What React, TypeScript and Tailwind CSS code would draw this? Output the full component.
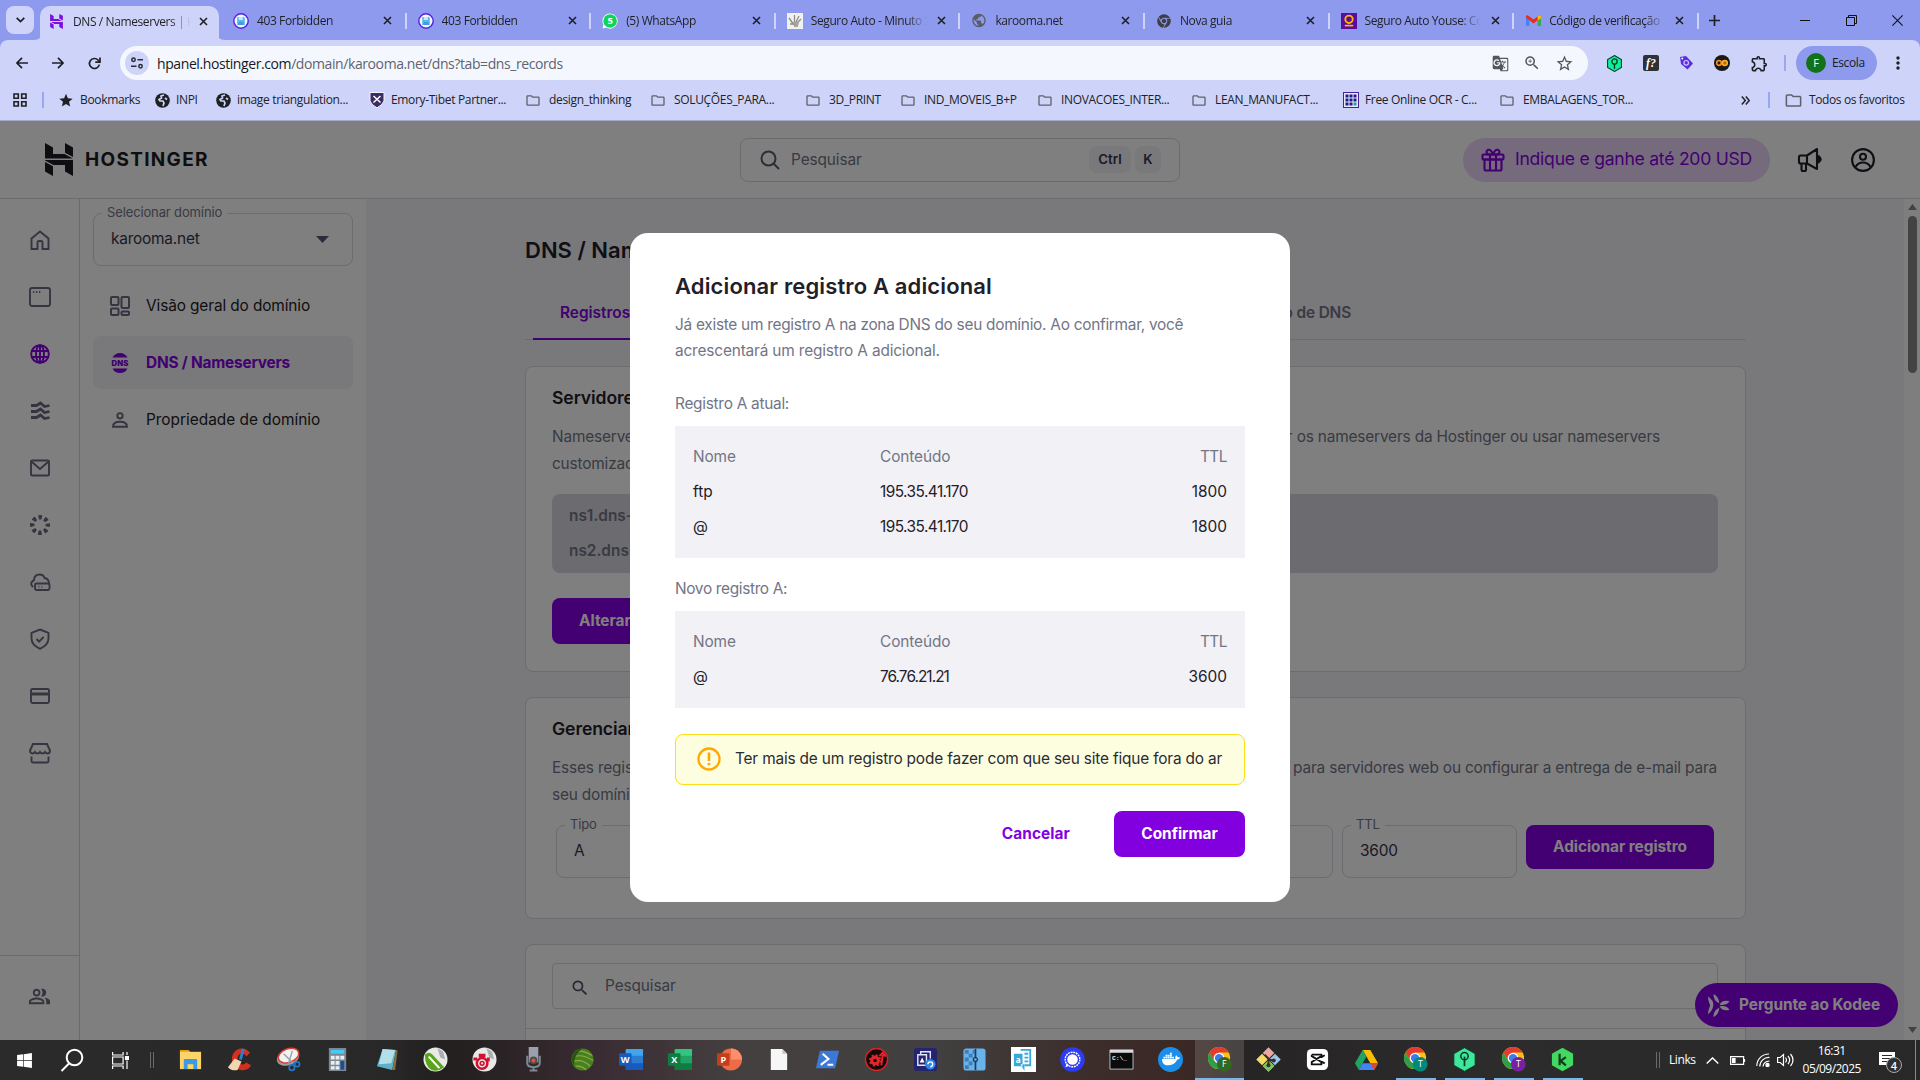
import React from 'react';
import { FaChrome, FaDocker, FaWindows } from 'react-icons/fa';
import { MdGTranslate, MdMoreVert, MdOutlineExtension, MdOutlineFolder, MdPublic, MdSearch, MdStar, MdStarBorder, MdZoomIn, MdOutlinePeopleAlt } from 'react-icons/md';
import { SiHostinger } from 'react-icons/si';

/* ---------- small pictograms ---------- */

const Close = () => (
  <svg className="size-[9px] shrink-0" viewBox="0 0 9 9" fill="none" stroke="#1f2024" strokeWidth="1.6"><path d="M1 1l7 7M8 1L1 8" /></svg>
);

const ForbiddenIcon = () => (
  <svg className="size-4" viewBox="0 0 16 16"><circle cx="8" cy="8" r="7.2" fill="#eef6ff" stroke="#5b1fe0" strokeWidth="1.4" /><path d="M4.2 4h6.6l1 1v7H4.2z" fill="#5db4f0" /><path d="M5.8 4h4v3h-4z" fill="#c8e8ff" /><path d="M5.4 9h5.2v3H5.4z" fill="#3f9de0" /></svg>
);
const WhatsIcon = () => (
  <svg className="size-4" viewBox="0 0 16 16"><path d="M8 .4a7.6 7.6 0 1 1-3.8 14.2L.6 15.4l.9-3.6A7.6 7.6 0 0 1 8 .4z" fill="#fff" /><circle cx="8.1" cy="8" r="6.8" fill="#0bd65b" /><text x="8.1" y="11.3" textAnchor="middle" fontSize="9.5" fontWeight="700" fill="#fff" fontFamily="Open Sans">5</text></svg>
);
const HandIcon = () => (
  <svg className="size-4" viewBox="0 0 16 16"><path d="M0 0h16v16H0z" fill="#f1f1f1" /><path d="M2 5l5 7M7.500 2v9M9 9l3-6M3 11h5M10 10l4-4M7 13h4" stroke="#8c8c86" strokeWidth="1.3" fill="none" /><path d="M6 9h6l-1 4H8z" fill="#a5a49c" /></svg>
);
const YouseIcon = () => (
  <svg className="size-4" viewBox="0 0 16 16"><path d="M0 0h16v16H0z" fill="#5a0ba0" /><circle cx="8" cy="6.300" r="3.700" fill="none" stroke="#ffb400" strokeWidth="1.900" /><path d="M3.800 12.600h8.400" stroke="#ffb400" strokeWidth="1.700" /></svg>
);
const GmailIcon = () => (
  <svg className="h-[11px] w-[15px]" viewBox="0 0 15 11"><path d="M0 1.500V10q0 1 1 1h2.400V4z" fill="#4285f4" /><path d="M15 1.500V10q0 1-1 1h-2.400V4z" fill="#34a853" /><path d="M0 2V1.200Q.4 0 2 .4L7.500 4.600 13 .4q1.600-.4 2 .8V2.600L7.500 8.400 0 2.600z" fill="#ea2a1c" /><path d="M11.600 1.500L13 .4q1.600-.4 2 .8v2l-3.400 2.300z" fill="#fbbc04" /></svg>
);
const Sparkle = ({ className }: { className: string }) => (
  <svg className={className} viewBox="0 0 22 22" fill="currentColor"><path d="M6.200 0q5 2.200 5.600 8.800Q6 6.500 6.200 0zM6.200 22q5-2.200 5.600-8.800Q6 15.500 6.200 22zM.8 2.500Q6.500 6 6 11T.8 19.500Q1.200 15 3 11 1.200 7 .8 2.500zM12 10.200Q14.500 5 21.500 6.800 19 11.500 12 10.200zM12 11.800q2.500 5.200 9.500 3.400Q19 10.500 12 11.800z" /></svg>
);

/* ---------- browser chrome ---------- */

const tabs = [
  { icon: <ForbiddenIcon />, title: '403 Forbidden' },
  { icon: <ForbiddenIcon />, title: '403 Forbidden' },
  { icon: <WhatsIcon />, title: '(5) WhatsApp' },
  { icon: <HandIcon />, title: 'Seguro Auto - Minuto Seguros' },
  { icon: <MdPublic className="size-[17px] text-[#5a5d66]" />, title: 'karooma.net' },
  { icon: <FaChrome className="size-[14px] text-[#3d3f45]" />, title: 'Nova guia' },
  { icon: <YouseIcon />, title: 'Seguro Auto Youse: Cotação' },
  { icon: <GmailIcon />, title: 'Código de verificação' },
];

const fade = '[mask-image:linear-gradient(to_right,#000_82%,transparent)]';

function TabStrip() {
  return (
    <div className="flex h-10 items-stretch bg-[#8e9aee] text-[12px] tracking-[-0.4px] text-[#1f2024]">
      <div className="ml-1.5 mt-1.5 flex h-7 w-7 items-center justify-center rounded-lg bg-[#ced4f9]">
        <svg className="h-[6px] w-[9px]" viewBox="0 0 9 6" fill="none" stroke="#1f2024" strokeWidth="1.8"><path d="M.7.800l3.800 3.800L8.300.8" /></svg>
      </div>
      <div className="flex w-[188px] items-end">
        <svg className="size-2 shrink-0" viewBox="0 0 8 8"><path d="M8 0v8H0q8 0 8-8z" fill="#ced4f9" /></svg>
        <div className="-mx-[2px] flex h-[34px] w-[179px] shrink-0 items-center rounded-t-[10px] bg-[#ced4f9] pb-[3px] pl-[9px]">
          <SiHostinger className="size-[15px] text-[#7a10dc]" />
          <span className={`ml-[9px] w-[118px] overflow-hidden whitespace-nowrap ${fade}`}>DNS / Nameservers | Hostinger</span>
          <span className="ml-[8px]"><Close /></span>
        </div>
        <svg className="size-2 shrink-0" viewBox="0 0 8 8"><path d="M0 0v8h8Q0 8 0 0z" fill="#ced4f9" /></svg>
      </div>
      <div className="flex pt-px">
        {tabs.map((t, i) => (
          <div key={i} className="flex w-[184.600px] items-center pl-[11px]">
            <span className="flex w-4 shrink-0 justify-center">{t.icon}</span>
            <span className={`ml-[8px] w-[116px] overflow-hidden whitespace-nowrap ${fade}`}>{t.title}</span>
            <span className="ml-[10px]"><Close /></span>
            <span className="ml-auto h-4 w-[2px] bg-[#ced4f9]" />
          </div>
        ))}
      </div>
      <div className="flex flex-1 items-center">
        <svg className="ml-[10px] size-[11px]" viewBox="0 0 11 11" stroke="#1f2024" strokeWidth="1.700"><path d="M5.500 0v11M0 5.500h11" /></svg>
        <svg className="ml-[80px] h-px w-[10px]" viewBox="0 0 10 1"><path d="M0 0h10v1H0z" fill="#111" /></svg>
        <svg className="ml-[36px] size-[11px]" viewBox="0 0 11 11" fill="none" stroke="#111"><path d="M.5 2.500h8v8h-8zM2.500 2.500v-2h8v8h-2" /></svg>
        <svg className="ml-[35px] size-[11px]" viewBox="0 0 11 11" stroke="#111" strokeWidth="1.100"><path d="M.4.400l10.200 10.200M10.600.4L.4 10.600" /></svg>
      </div>
    </div>
  );
}

const Arrow = ({ flip }: { flip?: boolean }) => (
  <svg className={flip ? 'size-3 rotate-180' : 'size-3'} viewBox="0 0 12 12" fill="none" stroke="#1f2024" strokeWidth="1.700"><path d="M12 6H1.200M6 .8L.9 6 6 11.200" /></svg>
);

function Toolbar() {
  return (
    <div className="flex h-[43px] items-center pt-[3px]">
      <div className="ml-4 flex w-[104px] items-center gap-6">
        <Arrow />
        <Arrow flip />
        <svg className="size-[13px]" viewBox="0 0 13 13" fill="none" stroke="#1f2024" strokeWidth="1.700"><path d="M11.300 7.600A5 5 0 1 1 10 3l1.500 1.500" /><path d="M12 .500v4.700H7.300" /></svg>
      </div>
      <div className="flex h-[34px] w-[1468px] items-center rounded-full bg-[#f4f7fe] px-[5px]">
        <div className="flex size-6 items-center justify-center rounded-full bg-[#ced4f9]">
          <svg className="size-3" viewBox="0 0 12 12" fill="none" stroke="#2b2d33" strokeWidth="1.500"><circle cx="2.500" cy="2.800" r="1.700" /><path d="M6.500 2.800H12M0 9.200h5.500" /><circle cx="9.500" cy="9.200" r="1.700" /></svg>
        </div>
        <span className="ml-2 text-[14px] tracking-[-0.41px] text-[#5f6470]"><span className="text-[#17181c]">hpanel.hostinger.com</span>/domain/karooma.net/dns?tab=dns_records</span>
        <div className="ml-auto flex items-center gap-[14px] pr-[9px] text-[#54565e]">
          <MdGTranslate className="size-[17px]" />
          <MdZoomIn className="size-[18px]" />
          <MdStarBorder className="size-[19px]" />
        </div>
      </div>
      <div className="ml-[18px] flex items-center gap-[20px]">
        <svg className="size-[17px]" viewBox="0 0 16 16"><path d="M8 .5l6.500 3.700v7.600L8 15.500l-6.500-3.700V4.200z" fill="#10f09a" stroke="#063b2b" /><circle cx="8" cy="6.200" r="2.500" fill="none" stroke="#063b2b" strokeWidth="1.200" /><path d="M8 8.700V13" stroke="#063b2b" strokeWidth="1.300" /></svg>
        <span className="flex size-4 items-center justify-center rounded-[2px] bg-[#303134] text-[12px] font-bold italic leading-none text-white [font-family:'Liberation_Serif',serif]">f?</span>
        <svg className="h-4 w-[15px]" viewBox="0 0 15 16"><path d="M1 2l6-1 7 7.500-5.500 6L2 9z" fill="#5b2be8" /><circle cx="7.200" cy="7.800" r="2.300" fill="none" stroke="#cfc6ff" strokeWidth="1.200" /><circle cx="3.300" cy="3.500" r="1" fill="#fff" /></svg>
        <svg className="size-4" viewBox="0 0 16 16"><circle cx="8" cy="8" r="8" fill="#17171c" /><circle cx="5" cy="8" r="2.300" fill="none" stroke="#f28a1c" strokeWidth="1.700" /><circle cx="10.800" cy="8" r="2.500" fill="#b96d12" stroke="#fbb025" strokeWidth="1.500" /></svg>
        <MdOutlineExtension className="size-[19px] text-[#1f2024]" />
      </div>
      <span className="ml-[15px] h-4 w-[2px] bg-[#9ba6f0]" />
      <div className="ml-[10px] flex h-[34px] w-[81px] items-center rounded-full bg-[#8e9aee] pl-[10px]">
        <span className="flex size-5 items-center justify-center rounded-full bg-[#12721a] text-[11px] text-white">F</span>
        <span className="ml-[6px] text-[12px] tracking-[-0.4px] text-[#1b1c22]">Escola</span>
      </div>
      <MdMoreVert className="ml-[11px] size-[20px] text-[#1f2024]" />
    </div>
  );
}

const folder = <MdOutlineFolder className="size-[19px] text-[#5f636d]" />;
const globe = (
  <svg className="size-[15px]" viewBox="0 0 15 15"><circle cx="7.500" cy="7.500" r="7.300" fill="#1f2024" /><path d="M9 2l-3 1 .500 2L4 6.500l1 1.500h3l1 2-1 3M10 5l2 1.500" stroke="#ced4f9" strokeWidth="1.700" fill="none" /></svg>
);
const bookmarks = [
  { w: 'w-[96px]', icon: <MdStar className="size-[17px] text-[#1f2024]" />, t: 'Bookmarks' },
  { w: 'w-[61px]', icon: globe, t: 'INPI' },
  { w: 'w-[154px]', icon: globe, t: 'image triangulation...' },
  { w: 'w-[156px]', icon: <svg className="size-4" viewBox="0 0 16 16"><path d="M1 .5h14V9q-2 4.500-7 6.800Q3 13.500 1 9z" fill="#3a2c66" stroke="#f3f3fa" /><path d="M4.500 4l7 6.500M11.500 4l-7 6.500" stroke="#fff" strokeWidth="1.500" /></svg>, t: 'Emory-Tibet Partner...' },
  { w: 'w-[125px]', icon: folder, t: 'design_thinking' },
  { w: 'w-[155px]', icon: folder, t: 'SOLUÇÕES_PARA...' },
  { w: 'w-[95px]', icon: folder, t: '3D_PRINT' },
  { w: 'w-[137px]', icon: folder, t: 'IND_MOVEIS_B+P' },
  { w: 'w-[154px]', icon: folder, t: 'INOVACOES_INTER...' },
  { w: 'w-[152px]', icon: folder, t: 'LEAN_MANUFACT...' },
  { w: 'w-[156px]', icon: <svg className="size-4" viewBox="0 0 16 16"><path d="M0 0h16v16H0z" fill="#4a1f9c" /><path d="M1 1h14v14H1z" fill="#e8e8f8" /><path d="M2.500 2.500h3v3h-3zm4 0h3v3h-3zm4 0h3v3h-3zm-8 4h3v3h-3zm4 0h3v3h-3zm4 0h3v3h-3zm-8 4h3v3h-3zm4 0h3v3h-3z" fill="#1d1a86" /><path d="M10.500 10.500h3v3h-3z" fill="#17a2a2" /></svg>, t: 'Free Online OCR - C...' },
  { w: 'w-[150px]', icon: folder, t: 'EMBALAGENS_TOR...' },
];

function BookmarkBar() {
  return (
    <div className="flex h-[38px] items-center border-b border-[#a3a9c9] pb-[3px] text-[12px] tracking-[-0.33px] text-[#202228]">
      <svg className="ml-[13px] size-[14px]" viewBox="0 0 14 14" fill="none" stroke="#1f2024" strokeWidth="1.600"><path d="M1 1h4.300v4.300H1zM8.700 1H13v4.300H8.700zM1 8.700h4.300V13H1zM8.700 8.700H13V13H8.700z" /></svg>
      <span className="ml-[15px] mr-[14px] h-4 w-[2px] bg-[#9ba6f0]" />
      <div className="flex">
        {bookmarks.map((b) => (
          <div key={b.t} className={`flex items-center whitespace-nowrap ${b.w}`}>
            <span className="flex w-4 shrink-0 justify-center">{b.icon}</span>
            <span className={b.icon === folder ? 'ml-[8px]' : 'ml-[6px]'}>{b.t}</span>
          </div>
        ))}
      </div>
      <svg className="ml-auto size-[9px]" viewBox="0 0 9 9" fill="none" stroke="#1f2024" strokeWidth="1.500"><path d="M.8.500l3.500 4-3.500 4M4.800.500l3.500 4-3.500 4" /></svg>
      <span className="ml-[18px] mr-[14px] h-4 w-[2px] bg-[#9ba6f0]" />
      <div className="flex w-[136px] items-center whitespace-nowrap">{folder}<span className="ml-[6px] tracking-[-0.380px]">Todos os favoritos</span></div>
    </div>
  );
}

/* ---------- panel ---------- */

const railIcons = [
  <path d="M2.500 9.500L11 2.500l8.500 7V20h-6v-6.500q0-1.500-1.500-1.500h-2q-1.500 0-1.500 1.500V20h-6z" />,
  <><rect x="1" y="2" width="20" height="18" rx="2" /><path d="M4 6h1.300M7 6h1.300M10 6h1.300" /></>,
  <><circle cx="11" cy="11" r="8.800" /><ellipse cx="11" cy="11" rx="4" ry="8.800" /><path d="M2.500 8h17M2.500 14h17M11 2v18" /></>,
  <path d="M2 5.500h5.500L11.500 3l4 3.500 5-1M2 11.500h5.500L11.500 9l4 3.500 5-1M2 17.500h5.500l4-2.500 4 3.500 5-1" strokeWidth="2.800" />,
  <><rect x="2" y="3.500" width="18" height="15" rx="1" /><path d="M3 5l8 7 8-7" /></>,
  <circle cx="11" cy="11" r="7.800" strokeWidth="4.400" strokeDasharray="3.400 2.726" strokeDashoffset="1.700" />,
  <><path d="M4 16Q.8 13 3.200 10.500 4.500 9.500 5 9 5.500 3.500 10.500 3.500q4 0 5 3.500 4 .5 4.500 5" /><rect x="6" y="12.500" width="14.500" height="6.500" rx="1.500" /><path d="M9.500 15.800h.8M12.500 15.800h.8" /></>,
  <><path d="M11 1.500l8.500 3.300v5.500Q19.500 17 11 20.800 2.500 17 2.500 10.300V4.800z" /><path d="M7.500 11l2.600 2.600 4.600-4.800" /></>,
  <><rect x="2" y="4" width="18" height="14" rx="1.500" /><path d="M2 9h18" strokeWidth="3" /></>,
  <path d="M4 2h14l3 6.500q0 3-2.500 3-1.500 0-2.500-1.500-1 1.500-2.500 1.500T11 10q-1 1.500-2.500 1.500T6 10q-1 1.500-2.500 1.500Q1 11.500 1 8.500zM2.500 14.500V19q0 1.500 1.500 1.500h14q1.500 0 1.500-1.500v-4.500" />,
];

function Rail() {
  return (
    <div className="flex w-20 shrink-0 flex-col border-r border-[#d6d5dc] bg-white text-[#6d6880]">
      <div className="flex flex-col items-center gap-[35px] pt-[30px]">
        {railIcons.map((p, i) => (
          <svg key={i} className={i === 2 ? 'size-[22px] text-[#8400e0]' : 'size-[22px]'} viewBox="0 0 22 22" fill="none" stroke="currentColor" strokeWidth="1.900">{p}</svg>
        ))}
      </div>
      <div className="mt-auto flex h-[85px] items-start justify-center border-t border-[#d6d5dc] pt-[29px]">
        <MdOutlinePeopleAlt className="size-[23px]" />
      </div>
    </div>
  );
}

function Field({ label, value, className, children }: { label: string; value: string; className: string; children?: React.ReactNode }) {
  return (
    <div className={`relative h-[53px] rounded-lg border border-[#d8d7de] ${className}`}>
      <span className="absolute -top-[11px] left-[8px] bg-white px-[5px] text-[13px] leading-[18px] tracking-[-0.13px] whitespace-nowrap text-[#727586]">{label}</span>
      <div className="flex h-full items-center pb-px pl-[17px] text-[15.400px] tracking-[-0.2px] text-[#36344d]">{value}{children}</div>
    </div>
  );
}

function Sidebar() {
  return (
    <div className="flex w-[288px] shrink-0 flex-col border-r-2 border-[#f5f5f8] bg-white pl-[13px] pr-[14px] pt-[14px] text-[15.400px] text-[#1f2029]">
      <Field label="Selecionar domínio" value="karooma.net" className="w-[260px]">
        <svg className="ml-auto mr-[23px] h-[7px] w-[13px]" viewBox="0 0 13 7"><path d="M0 0h13L6.500 7z" fill="#5b5675" /></svg>
      </Field>
      <div className="mt-[13px] flex h-[53px] items-center pl-[17px]">
        <svg className="size-5" viewBox="0 0 20 20" fill="none" stroke="#6d6880" strokeWidth="2"><rect x="1" y="1" width="7.500" height="8" rx="1" /><rect x="11.500" y="1" width="7.500" height="11" rx="1" /><rect x="1" y="12.500" width="7.500" height="6.500" rx="1" /><rect x="11.500" y="15.500" width="7.500" height="3.500" rx="1" /></svg>
        <span className="ml-4 tracking-[-0.11px]">Visão geral do domínio</span>
      </div>
      <div className="mt-[4px] flex h-[53px] w-[260px] items-center rounded-lg bg-[#f2f1f6] pl-[17px] text-[#8400e0]">
        <svg className="size-5" viewBox="0 0 20 20" fill="currentColor"><path d="M2.500 4.600Q5 0 10 0t7.500 4.600zM2.500 15.400Q5 20 10 20t7.500-4.600z" /><text x="10" y="12.700" textAnchor="middle" fontSize="7.800" fontWeight="900" fontFamily="Inter">DNS</text></svg>
        <span className="ml-4 font-bold tracking-[-0.2px]">DNS / Nameservers</span>
      </div>
      <div className="mt-[4px] flex h-[53px] items-center pl-[17px]">
        <svg className="size-5" viewBox="0 0 20 20" fill="none" stroke="#6d6880" strokeWidth="1.900"><circle cx="10" cy="5.800" r="2.700" /><path d="M3 16.800q0-5 7-5t7 5z" /></svg>
        <span className="ml-4">Propriedade de domínio</span>
      </div>
    </div>
  );
}

function PanelHeader() {
  return (
    <div className="flex h-[78px] shrink-0 items-center border-b border-[#d6d5dc] bg-white">
      <div className="flex w-[740px] items-center pl-[45px] text-[#1c1d24]">
        <svg className="h-[33px] w-[28px]" viewBox="0 0 28 33" fill="currentColor"><path d="M0 0l8 4.500V11h11.500l8.500 4.500H0zM20 0l8 4.500V14l-8-4.300zM0 17h28v16l-8-4.500V22H8.500L0 17.500zM0 19l8 4.300V33l-8-4.500z" /></svg>
        <span className="ml-[12px] mt-[2px] text-[19px] font-bold tracking-[1.3px]">HOSTINGER</span>
      </div>
      <div className="flex h-[44px] w-[440px] items-center rounded-lg border border-[#d6d5dc] pl-[19px] pr-[18px]">
        <svg className="size-[20px]" viewBox="0 0 20 20" fill="none" stroke="#5b5870" strokeWidth="2"><circle cx="8.500" cy="8.500" r="7" /><path d="M13.500 13.500l5.500 5.500" /></svg>
        <span className="ml-[11px] text-[15.400px] tracking-[-0.1px] text-[#727586]">Pesquisar</span>
        <div className="ml-auto flex gap-1 text-[13.200px] font-semibold text-[#36344d]">
          <span className="flex h-[27px] w-[42px] items-center justify-center rounded-lg bg-[#f2f1f6]">Ctrl</span>
          <span className="flex h-[27px] w-[26px] items-center justify-center rounded-lg bg-[#f2f1f6]">K</span>
        </div>
      </div>
      <div className="ml-[283px] flex h-[44px] w-[307px] items-center rounded-full bg-[#ebd6fa] pl-[18px] text-[#8400e0]">
        <svg className="size-6" viewBox="0 0 24 24" fill="none" stroke="currentColor" strokeWidth="2.100"><rect x="1.500" y="6.500" width="21" height="5" rx="1" /><path d="M3.500 11.500h17V21q0 1.500-1.500 1.500H5Q3.500 22.500 3.500 21zM9 7v15M15 7v15M12 6.500Q10 1 7 1.800 4 3.500 7 6.500zM12 6.500q2-5.500 5-4.700 3 1.700 0 4.700z" /></svg>
        <span className="ml-[10px] whitespace-nowrap text-[17.600px] tracking-[-0.26px]">Indique e ganhe até 200 USD</span>
      </div>
      <svg className="ml-[27px] size-[26px]" viewBox="0 0 26 26" fill="none" stroke="#1f2029" strokeWidth="2.100" strokeLinejoin="round"><path d="M3.500 8.500h6.500L20 2v20l-10-5.500H3.500Q2 16.500 2 15v-5q0-1.500 1.500-1.500zM10 8.500v8M4.500 16.500v6q0 1.500 1.500 1.500h1.500Q9 24 9 22.500v-6" /><path d="M21.500 9q4.500 3.300 0 6.500z" fill="#1f2029" /></svg>
      <svg className="ml-[28px] size-6" viewBox="0 0 24 24" fill="none" stroke="#1f2029" strokeWidth="2.100"><circle cx="12" cy="12" r="10.900" /><circle cx="12" cy="8.800" r="3" /><path d="M4.500 19Q7 14.500 12 14.500t7.500 4.500" /></svg>
    </div>
  );
}

const card = 'flex shrink-0 flex-col rounded-lg border border-[#d8d7de] bg-white';

function MainArea() {
  return (
    <div className="flex flex-1 overflow-hidden bg-[#f2f1f6] text-[15.400px] text-[#727586]">
      <div className="flex w-[1379px] flex-col pl-[157px]">
        <div className="mt-[34px] h-[34px] shrink-0 text-[22px] font-semibold leading-[34px] text-[#1f2029]">DNS / Nameservers</div>
        <div className="mt-[20px] flex h-[53px] w-[1221px] shrink-0 border-b border-[#d8d7de] pl-[8px] font-semibold leading-[51px]">
          <div className="-mb-px h-[53px] w-[165px] border-b-2 border-[#8400e0] pl-[27px] text-[#8400e0]">Registros DNS</div>
          <div className="w-[653px] text-right tracking-[-0.15px]">Histórico de DNS</div>
        </div>
        <div className={`mt-[26px] h-[306px] w-[1221px] pl-[26px] pt-[18px] ${card}`}>
          <div className="h-[26px] text-[17.600px] font-semibold leading-[26px] tracking-[-0.1px] text-[#1f2029]">Servidores DNS</div>
          <div className="mt-[12px] flex w-[1108px] justify-between leading-[27px] tracking-[-0.17px]"><span>Nameservers atuais do seu domínio</span><span>alterar os nameservers da Hostinger ou usar nameservers</span></div>
          <div className="leading-[27px] tracking-[-0.17px]">customizados</div>
          <div className="mt-[17px] flex h-[79px] w-[1166px] flex-col rounded-lg bg-[#d8d7e0] pl-[17px] pt-[4px] font-semibold leading-[35px] text-[#727586]">
            <span>ns1.dns-parking.com</span>
            <span>ns2.dns-parking.com</span>
          </div>
          <div className="mt-[25px] flex h-[46px] w-[260px] items-center rounded-lg bg-[#8600e4] pl-[27px] font-bold text-white">Alterar nameservers</div>
        </div>
        <div className={`mt-[25px] h-[222px] w-[1221px] pl-[26px] pt-[18px] ${card}`}>
          <div className="h-[26px] text-[17.600px] font-semibold leading-[26px] tracking-[-0.1px] text-[#1f2029]">Gerenciar registros DNS</div>
          <div className="mt-[12px] flex w-[1165px] justify-between leading-[27px] tracking-[-0.17px]"><span>Esses registros definem o domínio</span><span>para servidores web ou configurar a entrega de e-mail para</span></div>
          <div className="leading-[27px] tracking-[-0.17px]">seu domínio.</div>
          <div className="mt-[17px] flex pl-[4px]">
            <Field label="Tipo" value="A" className="w-[200px]" />
            <Field label="Aponta para" value="76.76.21.21" className="ml-[9px] w-[568px]" />
            <Field label="TTL" value="3600" className="ml-[9px] w-[175px]" />
            <div className="ml-[9px] flex h-[44px] w-[188px] items-center justify-center rounded-lg bg-[#8600e4] font-bold tracking-[-0.04px] text-white">Adicionar registro</div>
          </div>
        </div>
        <div className="mt-[25px] h-[120px] w-[1221px] shrink-0 rounded-t-lg border border-[#d8d7de] bg-white pt-[18px]">
          <div className="ml-[26px] flex h-[46px] w-[1166px] items-center rounded border border-[#d8d7de] pl-[17px] text-[#727586]">
            <MdSearch className="mt-[3px] size-[20px] text-[#4c4a63]" />
            <span className="ml-[15px] tracking-[-0.1px]">Pesquisar</span>
          </div>
          <div className="mt-[19px] border-t border-[#d8d7de]" />
        </div>
      </div>
      <div className="ml-auto flex w-4 shrink-0 flex-col items-center bg-[#fcfcfc] pt-[5px]">
        <svg className="h-[6px] w-[9px]" viewBox="0 0 9 6"><path d="M4.500 0L9 6H0z" fill="#868686" /></svg>
        <span className="mt-[6px] h-[157px] w-[9px] rounded-full bg-[#868686]" />
        <svg className="mb-[7px] mt-auto h-[6px] w-[9px]" viewBox="0 0 9 6"><path d="M4.500 6L9 0H0z" fill="#868686" /></svg>
      </div>
    </div>
  );
}

/* ---------- dialog ---------- */

function RecordTable({ rows, className }: { rows: string[][]; className: string }) {
  return (
    <div className={`bg-[#f2f1f6] px-[18px] pt-[13px] text-[#1f2029] ${className}`}>
      <div className="flex h-[35px] items-center text-[#727586] tracking-[-0.1px]"><span className="w-[187px]">Nome</span><span className="flex-1">Conteúdo</span><span className="tracking-[-0.500px]">TTL</span></div>
      {rows.map((r, i) => (
        <div key={i} className="flex h-[35px] items-center"><span className="w-[187px]">{r[0]}</span><span className={r[1].startsWith('76') ? 'flex-1 tracking-[-0.950px]' : 'flex-1 tracking-[-0.550px]'}>{r[1]}</span><span>{r[2]}</span></div>
      ))}
    </div>
  );
}

function Dialog() {
  return (
    <div className="flex h-[669px] w-[660px] flex-col rounded-[18px] bg-white px-[45px] pt-[36px] text-[15.400px] text-[#727586]">
      <div className="h-[34px] text-[22px] font-semibold leading-[34px] tracking-[0.14px] text-[#1f2029]">Adicionar registro A adicional</div>
      <div className="mt-[9px] whitespace-nowrap leading-[26.400px] tracking-[-0.27px]">Já existe um registro A na zona DNS do seu domínio. Ao confirmar, você<br /><span className="tracking-[-0.160px]">acrescentará um registro A adicional.</span></div>
      <div className="mt-[26px] leading-[26px] tracking-[-0.270px]">Registro A atual:</div>
      <RecordTable className="mt-[9px] h-[132px]" rows={[['ftp', '195.35.41.170', '1800'], ['@', '195.35.41.170', '1800']]} />
      <div className="mt-[18px] leading-[26px] tracking-[-0.330px]">Novo registro A:</div>
      <RecordTable className="mt-[9px] h-[97px]" rows={[['@', '76.76.21.21', '3600']]} />
      <div className="mt-[26px] flex h-[51px] items-center rounded-lg border border-[#fadf17] bg-[#fdfee0] pb-px pl-[21px] text-[#2a2b33]">
        <svg className="size-[24px]" viewBox="0 0 24 24" fill="none" stroke="#fea800" strokeWidth="2.300"><circle cx="12" cy="12" r="10.500" /><path d="M12 5.500v8.500M12 16v2.200" strokeWidth="2.600" /></svg>
        <span className="ml-[14px] whitespace-nowrap tracking-[-0.17px]">Ter mais de um registro pode fazer com que seu site fique fora do ar</span>
      </div>
      <div className="mt-[26px] flex items-center justify-end font-bold">
        <span className="mr-[44px] text-[#8400e0] tracking-[0.1px]">Cancelar</span>
        <span className="flex h-[46px] w-[131px] items-center justify-center rounded-lg bg-[#8200e0] text-white tracking-[0px]">Confirmar</span>
      </div>
    </div>
  );
}

/* ---------- taskbar ---------- */

const Chrome = ({ badge, letter }: { badge: string; letter: string }) => (
  <svg viewBox="0 0 26 26"><circle cx="12.500" cy="11.500" r="11.500" fill="#fbc116" /><path d="M2.540 5.750A11.500 11.500 0 0 1 22.460 5.750H12.500L7.500 14.400z" fill="#e33b2e" /><path d="M2.540 5.750A11.500 11.500 0 0 0 12.500 23l5-8.600h-10z" fill="#2f9e4b" /><circle cx="12.500" cy="11.500" r="5.600" fill="#fff" /><circle cx="12.500" cy="11.500" r="4.300" fill="#3b7bea" /><circle cx="18" cy="18" r="7.600" fill={badge} /><text x="18" y="21.300" fontSize="9" textAnchor="middle" fill="#fff" fontFamily="Open Sans">{letter}</text></svg>
);
const Office = ({ dark, mid, light, letter, round }: { dark: string; mid: string; light: string; letter: string; round?: boolean }) => (
  <svg viewBox="0 0 26 26">{round ? <><circle cx="14.500" cy="13" r="11.500" fill={mid} /><path d="M14.500 1.500A11.500 11.500 0 0 1 26 13H14.500z" fill={light} /></> : <><rect x="7" y="2" width="18" height="22" rx="1.500" fill={mid} /><path d="M7 3.500q0-1.500 1.500-1.500h15Q25 2 25 3.500V9H7z" fill={light} /><path d="M7 17h18v5.500q0 1.500-1.500 1.500h-15Q7 24 7 22.500z" fill={dark} /></>}<rect x="0" y="6.500" width="13" height="13" rx="1" fill={dark} /><text x="6.500" y="16.500" fontSize="9.500" fontWeight="700" textAnchor="middle" fill="#fff" fontFamily="Open Sans">{letter}</text></svg>
);

const apps: React.ReactNode[] = [
  <svg viewBox="0 0 26 26"><path d="M2 3h9l2 2.500h-11z" fill="#e8a317" /><path d="M2 5h22v18H2z" fill="#fcd46a" /><path d="M6 14q0-1.500 1.500-1.500h11Q20 12.500 20 14v9h-4v-5h-6v5H6z" fill="#3d9ae0" /></svg>,
  <svg viewBox="0 0 26 26"><path d="M24 6Q18-1 10 3 3 8 6 17q4 8 12 7 5-1 7-5l-5-3q-2 3-5 2-5-2-4-7 2-5 5-4 3 0 4 3z" fill="#d5301f" /><path d="M14 13L17 2" stroke="#2a7fd0" strokeWidth="3" /><path d="M8 12l7 3-4 9q-7 1-10-3z" fill="#f0d7b0" /></svg>,
  <svg viewBox="0 0 26 26"><ellipse cx="12.500" cy="11" rx="12" ry="8" fill="#9a9da1" transform="rotate(-20 12.500 11)" /><ellipse cx="13" cy="9" rx="11" ry="7" fill="#f3f3f3" stroke="#d9423a" strokeWidth="1.600" transform="rotate(-20 13 9)" /><path d="M8 7l9 9M17 4l-4 13" stroke="#9aa3ab" strokeWidth="1.500" /><circle cx="16.500" cy="21.500" r="2.800" fill="none" stroke="#2275c4" strokeWidth="1.800" /><circle cx="22" cy="18" r="2.500" fill="none" stroke="#2275c4" strokeWidth="1.800" /></svg>,
  <svg viewBox="0 0 26 26"><path d="M4 1h18v24H4z" fill="#7d8691" /><path d="M6 3h14v4H6z" fill="#40cdf5" /><path d="M6 9h4v4H6zm5 0h4v4h-4zm5 0h4v4h-4zM6 14.500h4v4H6zm5 0h4v4h-4zM6 20h4v3.500H6zm5 0h4v3.500h-4z" fill="#e9eef2" /><path d="M16 14.500h4v9h-4z" fill="#194f97" /></svg>,
  <svg viewBox="0 0 26 26"><path d="M9 2l14 1-4 21-16-4z" fill="#5fb0c4" /><path d="M9 2l13 1-4 14-13 1z" fill="#b3e0e8" /><path d="M19 24l4-21 1.500 1L22 24z" fill="#8a6f3f" /></svg>,
  <svg viewBox="0 0 26 26"><circle cx="13" cy="13" r="12.500" fill="#e9eae8" /><path d="M15 1l3 10 5 2-2-8z" fill="#a9aeb2" /><path d="M2 8q4-4 8 0l12 13q-6 5-13 3Q2 20 2 8z" fill="#58a618" /><path d="M6 10l11 12" stroke="#fff" strokeWidth="2.200" /></svg>,
  <svg viewBox="0 0 26 26"><circle cx="13" cy="13" r="12.500" fill="#e9eae8" /><path d="M15 1l3 10 5 2-2-8z" fill="#a9aeb2" /><circle cx="10.500" cy="17" r="5.500" fill="none" stroke="#cf1230" strokeWidth="2.600" /><circle cx="10.500" cy="17" r="2" fill="none" stroke="#cf1230" strokeWidth="1.600" /><path d="M7 7h7v4H7zM1.500 11h4v3h-4zM15.500 11h3v4h-3z" fill="#cf1230" /></svg>,
  <svg viewBox="0 0 26 26"><path d="M8 0h10v16H8z" fill="#98a1ac" /><path d="M6.500 9v8q0 4 6.500 4t6.500-4V9M13 21v4M9 24.500h8" stroke="#7d8691" strokeWidth="2.200" fill="none" /><circle cx="13" cy="14" r="3" fill="#f0541e" stroke="#4a4d55" strokeWidth="2" /></svg>,
  <svg viewBox="0 0 26 26"><circle cx="13" cy="13" r="11.500" fill="#477f22" /><path d="M8 4q8 0 15 5M4 10q9-3 20 4M3 15q10-3 18 5M6 20q6-1 11 4" stroke="#8fae3c" strokeWidth="1.200" fill="none" /><path d="M13 1.500a11.500 11.500 0 0 0-9 18q0-12 9-18z" fill="#27540f" /></svg>,
  <Office dark="#185abd" mid="#2b7cd3" light="#41a5ee" letter="W" />,
  <Office dark="#107c41" mid="#21a366" light="#33c481" letter="X" />,
  <Office dark="#c43e1c" mid="#ed6c47" light="#ff8f6b" letter="P" round />,
  <svg viewBox="0 0 26 26"><path d="M5 2h12l5 5v17H5z" fill="#f7f7f7" /><path d="M17 2l5 5h-5z" fill="#c4c4c4" /></svg>,
  <svg viewBox="0 0 26 26"><path d="M5 4h20l-4 18H1z" fill="#3c78d8" /><path d="M8 7l6 5.500L6 18.500M13 18.500h6" stroke="#fff" strokeWidth="2.200" fill="none" /></svg>,
  <svg viewBox="0 0 26 26"><circle cx="13" cy="13" r="11.500" fill="#140808" stroke="#d92128" strokeWidth="1.500" /><circle cx="11.500" cy="14" r="3.500" fill="none" stroke="#e3262c" strokeWidth="3.200" /><circle cx="11.500" cy="14" r="5.600" fill="none" stroke="#e3262c" strokeWidth="1.600" strokeDasharray="2.200 2.200" /><path d="M18 19l1.500-11M16 9.500L19.500 6l3 4" stroke="#e3262c" strokeWidth="2" fill="none" /></svg>,
  <svg viewBox="0 0 26 26"><rect x="1" y="1" width="24" height="24" rx="3" fill="#25246f" /><path d="M8 8V5h10v7M5 8h9v11H5z" stroke="#dfe4ff" strokeWidth="1.500" fill="none" /><path d="M7 16l2.500-5 2.500 5z" fill="#fff" /><circle cx="18" cy="18" r="5.500" fill="#2b86ec" /><path d="M15.500 18a2.500 2.500 0 1 1 2.500 2.500" stroke="#fff" strokeWidth="1.400" fill="none" /></svg>,
  <svg viewBox="0 0 26 26"><rect x="1.500" y="1.500" width="23" height="23" rx="3" fill="#69b2ea" /><path d="M3 3h4v4H3zm4 4h4v4H7zm-4 4h4v4H3zm4 4h4v4H7zm-4 4h4v4H3zM11 3h2v4h-2zm0 8h2v4h-2z" fill="#3f7fb8" /><path d="M14 2v22" stroke="#1d3c5c" strokeWidth="1.800" /><circle cx="14" cy="13" r="2" fill="#69b2ea" stroke="#1d3c5c" strokeWidth="1.300" /></svg>,
  <svg viewBox="0 0 26 26"><path d="M0 0h26v26H0z" fill="#fff" /><path d="M10 3h10v16h-6M14 7h4M14 11h4M14 15h4" stroke="#36a9dc" strokeWidth="1.900" fill="none" /><path d="M3 7h9v13H3zM10 18l4 7V18z" fill="#36a9dc" /><text x="7.500" y="16.500" fontSize="9" fontWeight="700" textAnchor="middle" fill="#fff" fontFamily="Open Sans">a</text></svg>,
  <svg viewBox="0 0 26 26"><circle cx="13" cy="13" r="12.800" fill="#2e3bee" /><circle cx="13" cy="13" r="5.500" fill="#fff" /><circle cx="13" cy="13" r="7.600" fill="none" stroke="#fff" strokeWidth="1.500" strokeDasharray="2 .8" /><path d="M7 17l-1.500 4 4-1.500z" fill="#fff" /></svg>,
  <svg viewBox="0 0 26 26"><path d="M1 3h24v20H1z" fill="#0b0b0b" stroke="#b9bdc2" /><path d="M1 3h24v3H1z" fill="#d9dcdf" /><text x="3" y="13.500" fontSize="6.500" fontWeight="700" fill="#f0f0f0" fontFamily="Liberation Mono">C:\_</text></svg>,
  <span className="flex size-[25px] items-center justify-center rounded-full bg-[#1b8eea]"><FaDocker className="size-[18px] text-white" /></span>,
  <Chrome badge="#33691e" letter="F" />,
  <svg viewBox="0 0 26 26"><g transform="rotate(45 13 13)"><path d="M4 4h8.500v8.500H4z" fill="#e9a8a0" /><path d="M13.500 4H22v8.500h-8.500z" fill="#9ac4ec" /><path d="M13.500 13.500H22V22h-8.500z" fill="#f4dc67" /><path d="M13.500 13.500H22V22h-8.500z" fill="#7ac25d" /><path d="M4 13.500h8.500V22H4z" fill="#f4dc67" /></g><path d="M9 8l4 4v7M13 13l5 1" stroke="#3b2b25" strokeWidth="2" fill="none" /><circle cx="13" cy="19" r="2" fill="#3b2b25" /><circle cx="18.500" cy="14" r="2" fill="#3b2b25" /></svg>,
  <svg viewBox="0 0 26 26"><rect x="2" y="2" width="22" height="22" rx="5" fill="#fff" /><path d="M7 8h10v1.500l-10 6V18h10v-2.500l-10-6V8M17 10.500l3.500-2M17 15l3.500 2" stroke="#111" strokeWidth="1.900" fill="none" /></svg>,
  <svg viewBox="0 0 26 26"><path d="M9 3h8l8 14h-8z" fill="#fbbc04" /><path d="M9 3L1 17l4 7L13 10z" fill="#1fa463" /><path d="M5 24h16l4-7H9z" fill="#4285f4" /><path d="M25 17l-4 7-4-7z" fill="#ea4335" /></svg>,
  <Chrome badge="#00897b" letter="T" />,
  <svg viewBox="0 0 26 26"><path d="M13 .8l11 6.200v12L13 25.200 2 19V7z" fill="#3ee89a" stroke="#0c3a2b" strokeWidth=".8" /><circle cx="13" cy="9.500" r="3.800" fill="none" stroke="#0c3a2b" strokeWidth="1.600" /><path d="M13 10v10" stroke="#0c3a2b" strokeWidth="1.800" /></svg>,
  <Chrome badge="#7b1fa2" letter="T" />,
  <svg viewBox="0 0 26 26"><path d="M13 .8l11 6.200v12L13 25.200 2 19V7z" fill="#43d860" /><path d="M10 7v12M16.500 10.500L11 14.500l5.500 4.500" stroke="#0e3d1f" strokeWidth="2.300" fill="none" /></svg>,
];

function Taskbar() {
  return (
    <div className="flex h-10 shrink-0 items-stretch bg-[linear-gradient(to_right,#2b2b2b_0,#292828_380px,#221f1e_450px,#3a2c33_600px,#454040_740px,#413f3f_940px,#3c2d2b_1090px,#3a2824_1190px,#262424_1245px,#2d2c2c_1500px,#292828_1920px)] text-[12px] text-white">
      <div className="flex w-[166px] items-center">
        <FaWindows className="ml-4 size-[17px]" />
        <svg className="ml-[27px] size-[24px]" viewBox="0 0 24 24" fill="none" stroke="#fff" strokeWidth="2"><circle cx="14.500" cy="9.500" r="7.800" /><path d="M9 15.500L1.500 23" /></svg>
        <svg className="ml-[28px] size-[17px]" viewBox="0 0 17 17" fill="none" stroke="#fff" strokeWidth="1.200"><path d="M.6 0v3h10.500V0M.6 17v-3h10.500v3M.6 5h10.500v7H.6zM15 0v3M15 8.500V17" /><path d="M13.500 4.500h3v3h-3z" fill="#fff" /></svg>
        <span className="ml-[21px] h-4 w-[4px] border-x border-[#6a6a6a]" />
      </div>
      {apps.map((a, i) => (
        <div key={i} className={`flex w-[49px] shrink-0 justify-center ${i === 21 ? 'bg-white/15' : ''}`}>
          <div className={`flex h-10 items-center justify-center border-b-2 ${i === 21 ? 'w-[49px] border-[#76b9ed]' : i > 24 ? 'w-10 border-[#76b9ed]' : 'w-10 border-transparent'}`}>
            <div className="flex size-[25px] items-center justify-center [&>svg]:size-[25px]">{a}</div>
          </div>
        </div>
      ))}
      <div className="flex flex-1 items-center tracking-[-0.4px]">
        <span className="ml-[69px] h-4 w-[4px] border-x border-[#6a6a6a]" />
        <span className="ml-[9px]">Links</span>
        <svg className="ml-[10px] h-[7px] w-[13px]" viewBox="0 0 13 7" fill="none" stroke="#fff" strokeWidth="1.400"><path d="M.7 6.500l5.800-5.600 5.800 5.600" /></svg>
        <svg className="ml-[11px] h-[9px] w-[16px]" viewBox="0 0 16 9" fill="none" stroke="#fff" strokeWidth="1.200"><path d="M.6.600h13v7.800H.6zM14.500 3v3" /><path d="M2.500 2.500h2.500v4H2.500z" fill="#fff" /></svg>
        <svg className="ml-[10px] size-[14px]" viewBox="0 0 14 14" fill="none" stroke="#fff" strokeWidth="1.200"><path d="M.8 13A12 12 0 0 1 13 1M3.800 13.500A9 9 0 0 1 13.500 4.500M7 13.500Q7.500 8.500 13.500 8" /><circle cx="11.500" cy="12" r="1.600" fill="#fff" /></svg>
        <svg className="ml-[7px] h-[14px] w-[17px]" viewBox="0 0 17 14" fill="none" stroke="#fff" strokeWidth="1.200"><path d="M.6 4.500h2.600L6.500 1.500v11L3.200 9.500H.6zM8.500 4.500q2 2.500 0 5M11 2.800q3.300 4.200 0 8.400M13.500 1q5 6 0 12" /></svg>
        <div className="ml-[7px] w-[62px] text-center leading-[18px] tracking-[-0.550px]">16:31<br />05/09/2025</div>
        <div className="relative ml-[16px] flex size-6 items-center">
          <svg className="size-4" viewBox="0 0 16 16"><path d="M0 0h16v13h-5l-3 3v-3H0z" fill="#fff" /><path d="M3 3.500h10M3 6.500h10M3 9.500h7" stroke="#2b2b2b" strokeWidth="1.200" /></svg>
          <span className="absolute left-[7px] top-[9px] flex size-4 items-center justify-center rounded-full border border-[#aaa] bg-[#2f2f2f] text-[11px] font-semibold leading-none">4</span>
        </div>
        <span className="ml-auto mr-1 h-10 w-px bg-[#8a8a8a]" />
      </div>
    </div>
  );
}

export default function App() {
  return (
    <div className="flex h-[1080px] w-[1920px] flex-col overflow-hidden [font-family:'Open_Sans',sans-serif]">
      <div className="flex h-[121px] shrink-0 flex-col bg-[#8e9aee]">
        <TabStrip />
        <div className="rounded-t-[8px] bg-[#ced4f9]">
          <Toolbar />
          <BookmarkBar />
        </div>
      </div>
      <div className="relative flex h-[919px] flex-col bg-white [font-family:Inter,sans-serif]">
        <PanelHeader />
        <div className="flex flex-1 overflow-hidden">
          <Rail />
          <Sidebar />
          <MainArea />
        </div>
        <div className="absolute bottom-[13px] right-[22px] flex h-[44px] w-[203px] items-center rounded-full bg-[#8600e4] pl-[12px] text-white">
          <Sparkle className="size-[23px]" />
          <span className="ml-[9px] whitespace-nowrap text-[15.400px] font-bold tracking-[-0.06px]">Pergunte ao Kodee</span>
        </div>
        <div className="absolute inset-0 flex justify-center bg-black/50 pt-[112px]"><Dialog /></div>
      </div>
      <Taskbar />
    </div>
  );
}
